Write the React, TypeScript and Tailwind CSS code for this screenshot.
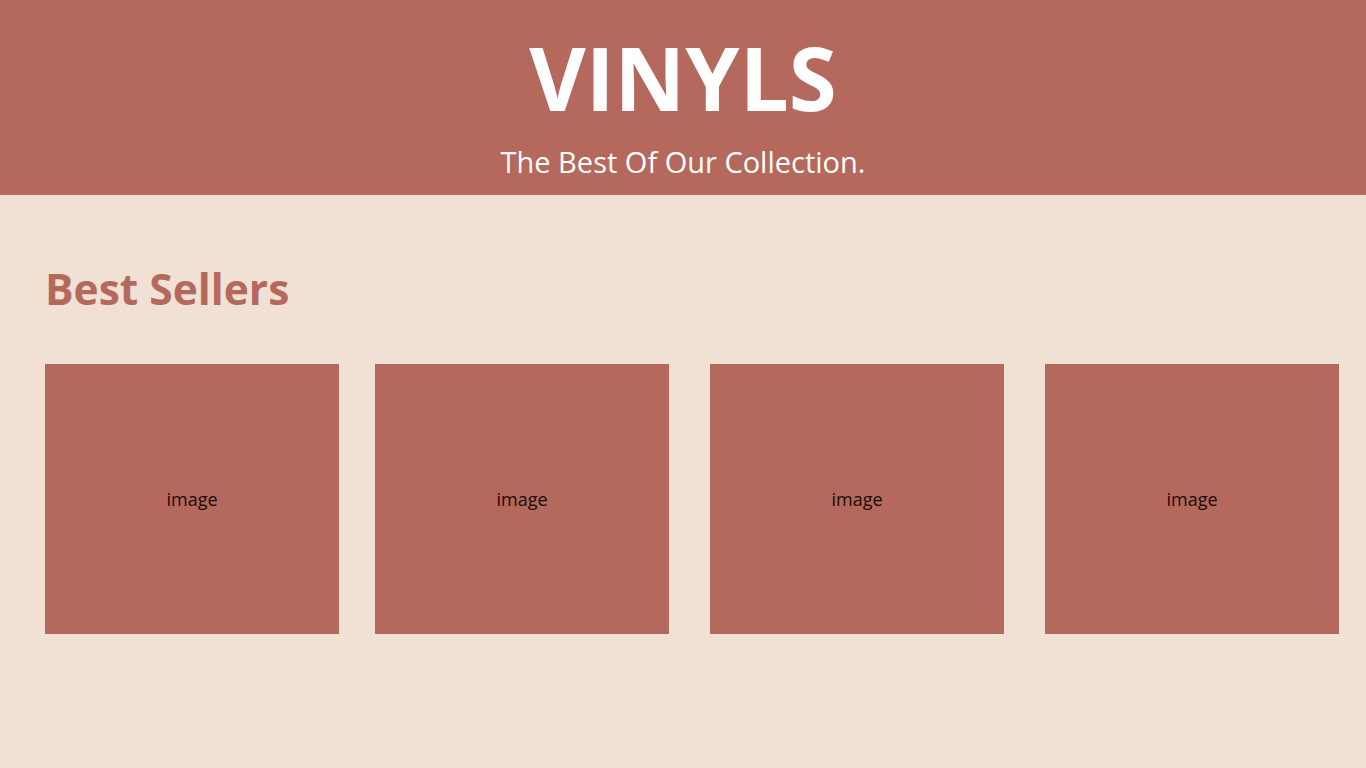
import React from "react";

const cards = ["ml-0", "ml-[36px]", "ml-[41px]", "ml-[41px]"];

export default function App() {
  return (
    <div className="min-h-[768px] w-full bg-[#f1e1d5]" style={{ fontFamily: '"Open Sans", sans-serif' }}>
      <header className="flex h-[195px] flex-col items-center bg-[#b5695c] text-white">
        <h1 className="mt-[22px] text-[87px] font-bold leading-[110px]">VINYLS</h1>
        <p className="mt-[10px] text-[29px] leading-[40px]">The Best Of Our Collection.</p>
      </header>
      <main className="px-[45px]">
        <h2 className="mt-[64px] text-[42.5px] font-bold leading-[60px] text-[#b5695c]">Best Sellers</h2>
        <div className="mt-[45px] flex">
          {cards.map((m, i) => (
            <div key={i} className={`${m} flex h-[270px] w-[294px] shrink-0 items-center justify-center bg-[#b5695c] text-[18px] text-[#1a0a08]`}>
              image
            </div>
          ))}
        </div>
      </main>
    </div>
  );
}
